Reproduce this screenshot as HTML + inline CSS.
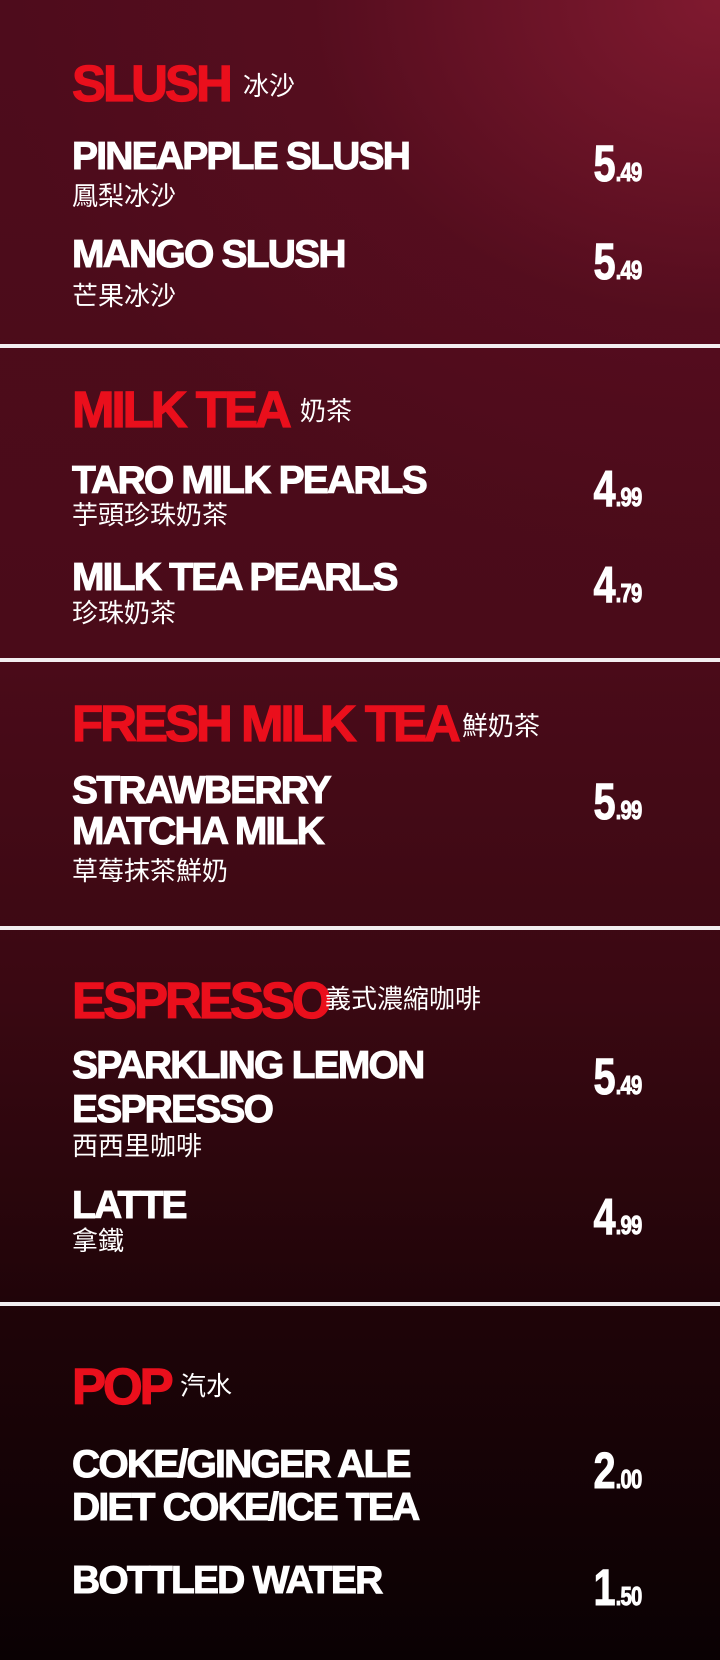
<!DOCTYPE html>
<html><head><meta charset="utf-8"><style>
html,body{margin:0;padding:0}
body{width:720px;height:1660px;position:relative;overflow:hidden;
background:
radial-gradient(ellipse 900px 700px at 720px 0px, rgba(130,26,48,0.95) 0%, rgba(90,14,32,0.6) 45%, rgba(0,0,0,0) 80%),
linear-gradient(180deg,#4e0c1c 0%,#4a0b19 40%,#3a0812 60%,#1e0408 80%,#0a0103 100%);
font-family:"Liberation Sans","Noto Sans CJK TC",sans-serif;}
div{position:absolute;white-space:nowrap;line-height:1}
.h{left:72px;font-size:51px;font-weight:bold;color:#ea0f1c;letter-spacing:-3px;-webkit-text-stroke:1.2px #ea0f1c}
.n{left:72px;font-size:39px;font-weight:bold;color:#fff;letter-spacing:-1.8px;-webkit-text-stroke:1px #fff}
.c{font-family:"Noto Sans CJK TC","Noto Sans CJK SC",sans-serif;font-size:26px;color:#fff;left:72px}
.hc{font-family:"Noto Sans CJK TC","Noto Sans CJK SC",sans-serif;font-size:26px;color:#fff}
.p{right:78px;color:#fff;font-weight:bold;transform:scaleX(0.78);transform-origin:right top;display:flex;align-items:baseline;-webkit-text-stroke:1px #fff}
.p b{font-size:51px}
.p i{font-style:normal;font-size:26px;letter-spacing:-1px}
.l{left:0;width:720px;height:4px;background:#f2eef0}
</style></head><body>

<div class="h" style="top:58px">SLUSH</div><div class="hc" style="left:243px;top:72px">冰沙</div>
<div class="n" style="top:137px">PINEAPPLE SLUSH</div><div class="c" style="top:182px">鳳梨冰沙</div>
<div class="p" style="top:138px"><b>5</b><i>.49</i></div>
<div class="n" style="top:235px">MANGO SLUSH</div><div class="c" style="top:282px">芒果冰沙</div>
<div class="p" style="top:236px"><b>5</b><i>.49</i></div>
<div class="l" style="top:344px"></div>

<div class="h" style="top:384px">MILK TEA</div><div class="hc" style="left:300px;top:397px">奶茶</div>
<div class="n" style="top:461px">TARO MILK PEARLS</div><div class="c" style="top:501px">芋頭珍珠奶茶</div>
<div class="p" style="top:463px"><b>4</b><i>.99</i></div>
<div class="n" style="top:558px">MILK TEA PEARLS</div><div class="c" style="top:599px">珍珠奶茶</div>
<div class="p" style="top:559px"><b>4</b><i>.79</i></div>
<div class="l" style="top:658px"></div>

<div class="h" style="top:698px">FRESH MILK TEA</div><div class="hc" style="left:462px;top:712px">鮮奶茶</div>
<div class="n" style="top:771px">STRAWBERRY</div>
<div class="n" style="top:812px">MATCHA MILK</div><div class="c" style="top:857px">草莓抹茶鮮奶</div>
<div class="p" style="top:776px"><b>5</b><i>.99</i></div>
<div class="l" style="top:926px"></div>

<div class="h" style="top:975px">ESPRESSO</div><div class="hc" style="left:325px;top:985px">義式濃縮咖啡</div>
<div class="n" style="top:1046px">SPARKLING LEMON</div>
<div class="n" style="top:1090px">ESPRESSO</div><div class="c" style="top:1132px">西西里咖啡</div>
<div class="p" style="top:1051px"><b>5</b><i>.49</i></div>
<div class="n" style="top:1186px">LATTE</div><div class="c" style="top:1227px">拿鐵</div>
<div class="p" style="top:1191px"><b>4</b><i>.99</i></div>
<div class="l" style="top:1302px"></div>

<div class="h" style="top:1361px">POP</div><div class="hc" style="left:180px;top:1372px">汽水</div>
<div class="n" style="top:1445px">COKE/GINGER ALE</div>
<div class="n" style="top:1488px">DIET COKE/ICE TEA</div>
<div class="p" style="top:1445px"><b>2</b><i>.00</i></div>
<div class="n" style="top:1561px">BOTTLED WATER</div>
<div class="p" style="top:1562px"><b>1</b><i>.50</i></div>
</body></html>
